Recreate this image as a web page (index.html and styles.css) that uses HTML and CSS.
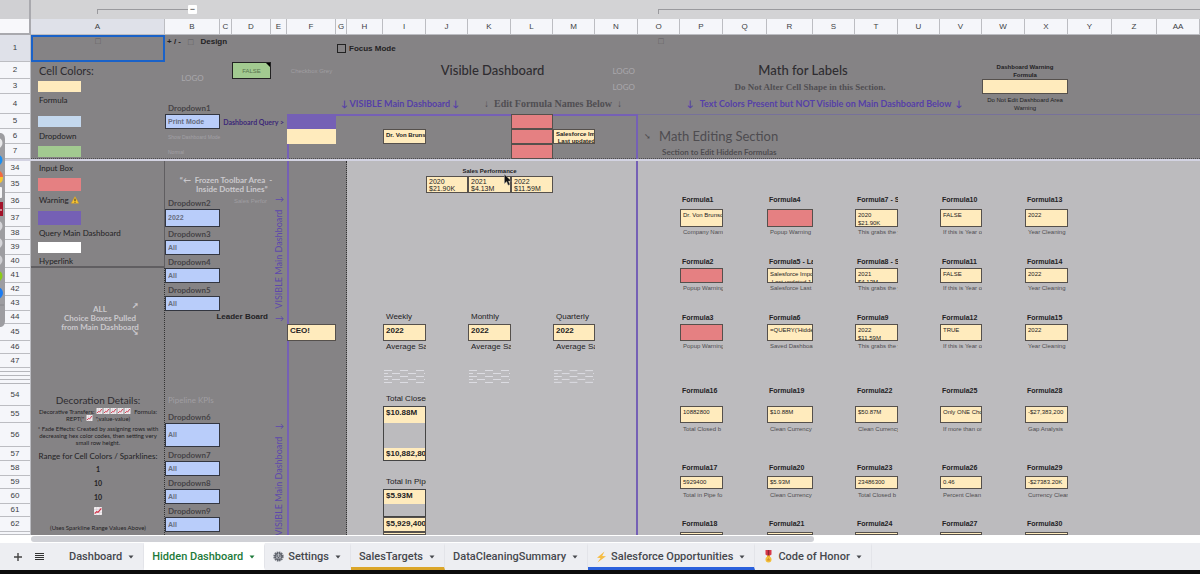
FILE: index.html
```html
<!DOCTYPE html>
<html lang="en">
<head>
<meta charset="utf-8">
<title>Hidden Dashboard</title>
<link rel="stylesheet" href="styles.css">
</head>
<body>
<svg class="defs" aria-hidden="true">
  <symbol id="chart" viewBox="0 0 12 12"><rect width="12" height="12" rx="1" fill="#f3eef0"/><path d="M0 4h12M0 8h12M4 0v12M8 0v12" stroke="#c9c3cc" stroke-width=".7"/><path d="M1 10l3-3 2 1 5-6" fill="none" stroke="#d32f45" stroke-width="1.8"/></symbol>
  <symbol id="warn" viewBox="0 0 12 12"><path d="M6 .8L11.6 11H.4z" fill="#f8c532" stroke="#d99d1c" stroke-width=".6" stroke-linejoin="round"/><path d="M6 4v3.8M6 8.8v1.3" stroke="#222" stroke-width="1.4"/></symbol>
  <symbol id="caret" viewBox="0 0 6 4"><path d="M.5 .5h5L3 3.5z" fill="currentColor"/></symbol>
  <symbol id="waves" viewBox="0 0 43 17"><g stroke="#dcdce2" stroke-width="1" stroke-dasharray="8 8" fill="none"><path d="M1 2.500h41M1 8.500h41M1 14.500h41"/><path d="M9 5.500h33M9 11.500h33"/><path d="M1 5.500h4M1 11.500h4"/></g></symbol>
</svg>
<main class="sheet">
<table class="grid">
<tbody>
<tr class="rg">
  <td class="h corner"></td>
  <td class="a w2 group"><button class="minus" type="button" aria-label="Collapse group">−</button></td>
  <td class="o wall group group-right"></td>
</tr>
<tr class="rl">
  <td class="h corner corner-letters"></td>
  <th class="a on">A</th><th class="b">B</th><th class="c">C</th><th class="d">D</th><th class="e">E</th><th class="f">F</th><th class="g">G</th><th class="hh">H</th><th class="i">I</th><th class="j">J</th><th class="k">K</th><th class="l">L</th><th class="m">M</th><th class="n">N</th><th class="o">O</th><th class="p">P</th><th class="q">Q</th><th class="r">R</th><th class="s">S</th><th class="t">T</th><th class="u">U</th><th class="v">V</th><th class="w">W</th><th class="x">X</th><th class="y">Y</th><th class="z">Z</th><th class="aa">AA</th>
</tr>
<tr class="r1">
  <td class="a wall zone zone-top"></td>
  <th class="h on">1</th>
  <td class="a selected faint top mid">□</td>
  <td class="b w3 top title-line"><b>+ / -</b><span class="faint">□</span><b class="design">Design</b></td>
  <td class="g w3 focus"><input type="checkbox" id="focus"><label for="focus">Focus Mode</label></td>
  <td class="o faint outline top mid">□</td>
</tr>
<tr class="r2">
  <th class="h">2</th>
  <td class="a round key-title">Cell Colors:</td>
  <td class="b h2 logo mid">LOGO</td>
  <td class="d false-box mid">FALSE</td>
  <td class="f pale mid">Checkbox Grey</td>
  <td class="hh w7 round heading mid">Visible Dashboard</td>
  <td class="n logo end">LOGO</td>
  <td class="p w6 round heading heading-math mid">Math for Labels</td>
  <td class="w w2 tiny strong mid">Dashboard Warning
Formula</td>
</tr>
<tr class="r3">
  <th class="h">3</th>
  <td class="a key"><span class="swatch cream"></span></td>
  <td class="n logo end">LOGO</td>
  <td class="p w6 serif mid">Do Not Alter Cell Shape in this Section.</td>
  <td class="w w2 box"></td>
</tr>
<tr class="r4">
  <th class="h">4</th>
  <td class="a key key-tall round">Formula</td>
  <td class="b round drop low"><label for="d1">Dropdown1</label></td>
  <td class="g w4 round violet violet-left">↓ VISIBLE Main Dashboard ↓</td>
  <td class="j w6 serif big mid">↓ &nbsp;Edit Formula Names Below &nbsp;↓</td>
  <td class="o w9 round violet violet-math mid">↓ &nbsp; Text Colors Present but NOT Visible on Main Dashboard Below &nbsp;↓</td>
  <td class="w w2 tiny mid">Do Not Edit Dashboard Area
Warning</td>
</tr>
<tr class="r5">
  <td class="f w9 zone frame"></td>
  <td class="o wall zone thin-rule"></td>
  <th class="h">5</th>
  <td class="a key"><span class="swatch sky"></span></td>
  <td class="b pick"><select id="d1"><option>Print Mode</option></select></td>
  <td class="c w3 round query">Dashboard Query &gt;</td>
  <td class="f purple"></td>
  <td class="l box red"></td>
</tr>
<tr class="r6">
  <th class="h">6</th>
  <td class="a key round">Dropdown</td>
  <td class="b micro">Show Dashboard Mode</td>
  <td class="f cream"></td>
  <td class="i box strong">Dr. Von Brunson</td>
  <td class="l box red"></td>
  <td class="m box tight strong">Salesforce Import
 Last updated 1</td>
  <td class="o w6 round section"><span class="tick">➘</span>Math Editing Section</td>
</tr>
<tr class="r7">
  <th class="h">7</th>
  <td class="a key"><span class="swatch green"></span></td>
  <td class="b micro">Normal</td>
  <td class="l box red"></td>
  <td class="o w6 round subsection">Section to Edit Hidden Formulas</td>
</tr>
<tr class="rf"><td class="h wall freeze"></td></tr>
<tr class="r34">
  <td class="a zone zone-side"></td>
  <td class="a zone zone-key"></td>
  <td class="b zone zone-tools"></td>
  <td class="f w9 zone frame frame-low"></td>
  <th class="h">34</th>
  <td class="a key round">Input Box</td>
  <td class="j w3 tiny strong low mid">Sales Performance</td>
</tr>
<tr class="r35">
  <th class="h">35</th>
  <td class="a key"><span class="swatch rose"></span></td>
  <td class="b w4 round light mid">“←&nbsp; Frozen Toolbar Area &nbsp;-
&nbsp; &nbsp; &nbsp; Inside Dotted Lines”</td>
  <td class="e vertical v1 round">↓ &nbsp; VISIBLE Main Dashboard &nbsp; ↓</td>
  <td class="j box seven">2020
$21.90K</td><td class="k box seven">2021
$4.13M</td><td class="l box seven">2022
$11.59M</td>
</tr>
<tr class="r36">
  <th class="h">36</th>
  <td class="a key round">Warning&nbsp;<svg class="ic8"><use href="#warn"/></svg></td>
  <td class="b round drop low"><label for="d2">Dropdown2</label></td>
  <td class="d pale light-label">Sales Perfor</td>
  <td class="p name up">Formula1</td><td class="r name up">Formula4</td><td class="t name up">Formula7 - S</td><td class="v name up">Formula10</td><td class="x name up">Formula13</td>
</tr>
<tr class="r37">
  <th class="h">37</th>
  <td class="a key"><span class="swatch purple"></span></td>
  <td class="b pick"><select id="d2"><option>2022</option></select></td>
  <td class="p box">Dr. Von Brunson</td><td class="r box red"></td><td class="t box">2020
$21.90K</td><td class="v box">FALSE</td><td class="x box">2022</td>
</tr>
<tr class="r38">
  <th class="h">38</th>
  <td class="a key round">Query Main Dashboard</td>
  <td class="b round drop"><label for="d3">Dropdown3</label></td>
  <td class="p note">Company Name</td><td class="r note">Popup Warning</td><td class="t note">This grabs the y</td><td class="v note">If this is Year or</td><td class="x note">Year Cleaning</td>
</tr>
<tr class="r39">
  <th class="h">39</th>
  <td class="a key"><span class="swatch white"></span></td>
  <td class="b pick"><select id="d3"><option>All</option></select></td>
</tr>
<tr class="r40">
  <th class="h">40</th>
  <td class="a key round">Hyperlink</td>
  <td class="b round drop"><label for="d4">Dropdown4</label></td>
  <td class="p name">Formula2</td><td class="r name">Formula5 - La</td><td class="t name">Formula8 - S</td><td class="v name">Formula11</td><td class="x name">Formula14</td>
</tr>
<tr class="r41">
  <th class="h">41</th>
  <td class="b pick"><select id="d4"><option>All</option></select></td>
  <td class="p box red"></td><td class="r box">Salesforce Import
 Last updated 1</td><td class="t box">2021
$4.13M</td><td class="v box">FALSE</td><td class="x box">2022</td>
</tr>
<tr class="r42">
  <th class="h">42</th>
  <td class="a h3 round light choice mid"><div>ALL
Choice Boxes Pulled
from Main Dashboard</div><div class="arrows"><span>➚</span><span>➘</span></div></td>
  <td class="b round drop"><label for="d5">Dropdown5</label></td>
  <td class="p note">Popup Warning</td><td class="r note">Salesforce Last</td><td class="t note">This grabs the y</td><td class="v note">If this is Year or</td><td class="x note">Year Cleaning</td>
</tr>
<tr class="r43">
  <th class="h">43</th>
  <td class="b pick"><select id="d5"><option>All</option></select></td>
</tr>
<tr class="r44">
  <th class="h">44</th>
  <td class="b w3 leader">Leader Board</td>
  <td class="i metric">Weekly</td><td class="k metric">Monthly</td><td class="m metric">Quarterly</td>
  <td class="p name">Formula3</td><td class="r name">Formula6</td><td class="t name">Formula9</td><td class="v name">Formula12</td><td class="x name">Formula15</td>
</tr>
<tr class="r45">
  <th class="h">45</th>
  <td class="f box value">CEO!</td>
  <td class="i box value">2022</td><td class="k box value">2022</td><td class="m box value">2022</td>
  <td class="p box red"></td><td class="r box">=QUERY('Hidden</td><td class="t box">2022
$11.59M</td><td class="v box">TRUE</td><td class="x box">2022</td>
</tr>
<tr class="r46">
  <th class="h">46</th>
  <td class="i metric">Average Sale</td><td class="k metric">Average Sale</td><td class="m metric">Average Sale</td>
  <td class="p note">Popup Warning</td><td class="r note">Saved Dashboard</td><td class="t note">This grabs the y</td><td class="v note">If this is Year or</td><td class="x note">Year Cleaning</td>
</tr>
<tr class="r47"><th class="h">47</th></tr>
<tr class="rh">
  <td class="h slim"></td>
  <td class="i"><svg class="waves"><use href="#waves"/></svg></td><td class="k"><svg class="waves"><use href="#waves"/></svg></td><td class="m"><svg class="waves"><use href="#waves"/></svg></td>
</tr>
<tr class="r54">
  <th class="h">54</th>
  <td class="a round deco low mid">Decoration Details:</td>
  <td class="b w2 round pipeline low">Pipeline KPIs</td>
  <td class="i metric low">Total Closed</td>
  <td class="p name high">Formula16</td><td class="r name high">Formula19</td><td class="t name high">Formula22</td><td class="v name high">Formula25</td><td class="x name high">Formula28</td>
</tr>
<tr class="r55">
  <td class="i zone stack stack-3"></td>
  <th class="h">55</th>
  <td class="a round fine mid"><div>Decorative Transfers: <svg class="ic"><use href="#chart"/></svg><svg class="ic"><use href="#chart"/></svg><svg class="ic"><use href="#chart"/></svg><svg class="ic"><use href="#chart"/></svg><svg class="ic"><use href="#chart"/></svg>&nbsp; Formula:<br>REPT(" <svg class="ic"><use href="#chart"/></svg> &nbsp;",value-value)</div></td>
  <td class="b round drop low"><label for="d6">Dropdown6</label></td>
  <td class="i fill value">$10.88M</td>
  <td class="p box">10882800</td><td class="r box">$10.88M</td><td class="t box">$50.87M</td><td class="v box">Only ONE Choice</td><td class="x box">-$27,383,200</td>
</tr>
<tr class="r56">
  <th class="h">56</th>
  <td class="a round fine mid">* Fade Effects: Created by assigning rows with
decreasing hex color codes, then setting very
small row height.</td>
  <td class="b pick"><select id="d6"><option>All</option></select></td>
  <td class="e vertical v2 round">↓ &nbsp; VISIBLE Main Dashboard &nbsp; ↓</td>
  <td class="p note high">Total Closed b</td><td class="r note high">Clean Currency</td><td class="t note high">Clean Currency</td><td class="v note high">If more than one</td><td class="x note high">Gap Analysis</td>
</tr>
<tr class="r57">
  <th class="h">57</th>
  <td class="a round range low mid">Range for Cell Colors / Sparklines:</td>
  <td class="b round drop low"><label for="d7">Dropdown7</label></td>
  <td class="i fill fill-last value">$10,882,800</td>
</tr>
<tr class="r58">
  <th class="h">58</th>
  <td class="a round number mid">1</td>
  <td class="b pick"><select id="d7"><option>All</option></select></td>
  <td class="p name up">Formula17</td><td class="r name up">Formula20</td><td class="t name up">Formula23</td><td class="v name up">Formula26</td><td class="x name up">Formula29</td>
</tr>
<tr class="r59">
  <th class="h">59</th>
  <td class="a round number mid">10</td>
  <td class="b round drop"><label for="d8">Dropdown8</label></td>
  <td class="i metric">Total In Pipe</td>
  <td class="p box">5929400</td><td class="r box">$5.93M</td><td class="t box">23486300</td><td class="v box">0.46</td><td class="x box">-$27383.20K</td>
</tr>
<tr class="r60">
  <td class="i zone stack stack-2"></td>
  <th class="h">60</th>
  <td class="a round number mid">10</td>
  <td class="b pick"><select id="d8"><option>All</option></select></td>
  <td class="i fill value">$5.93M</td>
  <td class="p note">Total in Pipe fo</td><td class="r note">Clean Currency</td><td class="t note">Total Closed b</td><td class="v note">Percent Clean</td><td class="x note">Currency Clean</td>
</tr>
<tr class="r61">
  <th class="h">61</th>
  <td class="a mid"><svg class="ic8"><use href="#chart"/></svg></td>
  <td class="b round drop"><label for="d9">Dropdown9</label></td>
</tr>
<tr class="r62">
  <th class="h">62</th>
  <td class="a round fine low mid">(Uses Sparkline Range Values Above)</td>
  <td class="b pick"><select id="d9"><option>All</option></select></td>
  <td class="i box value">$5,929,400</td>
  <td class="p name up">Formula18</td><td class="r name up">Formula21</td><td class="t name up">Formula24</td><td class="v name up">Formula27</td><td class="x name up">Formula30</td>
</tr>
<tr class="r63">
  <th class="h"></th>
  <td class="i box"></td><td class="p box"></td><td class="r box"></td><td class="t box"></td><td class="v box"></td><td class="x box"></td>
</tr>
</tbody>
</table>
</main>
<div class="scroll"><div class="thumb"></div></div>
<nav class="tabs">
  <button class="tool" type="button" aria-label="Add sheet"><svg width="10" height="10" viewBox="0 0 10 10"><path d="M5 1v8M1 5h8" stroke="#444" stroke-width="1.4"/></svg></button>
  <button class="tool tool-list" type="button" aria-label="All sheets"><svg width="9" height="10" viewBox="0 0 9 10"><path d="M0 1.500h9M0 3.500h9M0 5.500h9M0 7.500h9" stroke="#333"/></svg></button>
  <button class="tab" type="button">Dashboard<svg class="caret"><use href="#caret"/></svg></button>
  <button class="tab active" type="button">Hidden Dashboard<svg class="caret"><use href="#caret"/></svg></button>
  <button class="tab icon-tab" type="button"><svg width="11" height="11" viewBox="0 0 12 12"><circle cx="6" cy="6" r="4.600" fill="#b9bcc2" stroke="#666a72" stroke-width="2" stroke-dasharray="1.600 .8"/><circle cx="6" cy="6" r="3.600" fill="#8c9098" stroke="#555962"/><circle cx="6" cy="6" r="1.500" fill="#555962"/><path d="M6 6V2.500M6 6l3 2M6 6L3 8" stroke="#c9ccd2" stroke-width=".8"/></svg>Settings<svg class="caret"><use href="#caret"/></svg></button>
  <button class="tab gold" type="button">SalesTargets<svg class="caret"><use href="#caret"/></svg></button>
  <button class="tab" type="button">DataCleaningSummary<svg class="caret"><use href="#caret"/></svg></button>
  <button class="tab blue icon-tab" type="button"><svg width="11" height="12" viewBox="0 0 11 12"><path d="M8.500 .5L1 6.800l3.600.2L1.500 11.500 10 5.200 6.200 5z" fill="#f6bd45"/></svg>Salesforce Opportunities<svg class="caret"><use href="#caret"/></svg></button>
  <button class="tab icon-tab" type="button"><svg width="11" height="13" viewBox="0 0 11 13"><path d="M2.500 0h6v4.500l-3 2-3-2z" fill="#d8384a"/><path d="M4.800 0h1.400v6H4.800z" fill="#8e2434"/><path d="M4 5.500h3V7H4z" fill="#e9a92c"/><circle cx="5.500" cy="9.500" r="3" fill="#f2bf3c"/><path d="M5.500 7.600l.6 1.300 1.300.1-1 .9.300 1.300-1.200-.7-1.200.7.3-1.300-1-.9 1.300-.1z" fill="#d9962a"/></svg>Code of Honor<svg class="caret"><use href="#caret"/></svg></button>
</nav>
<footer class="edge"></footer>
<svg class="dock" viewBox="0 0 6 194" aria-hidden="true">
  <path d="M0 0h1q4 1 4 6v182q0 5-4 6H0z" fill="#9d9da1"/>
  <g><circle cx="-3" cy="10" r="5.500" fill="#e8e8ea"/><circle cx="-3" cy="27" r="5.500" fill="#1c8ef0"/><path d="M0 38q3 2 3 6H0z" fill="#f26a3d"/><path d="M0 44h3q0 5-3 6z" fill="#f7c62e"/><rect x="-5" y="54" width="7" height="11" rx="1" fill="#f6f6f8"/><rect x="-5" y="69" width="8" height="14" fill="#a3122a"/><path d="M0 77h2" stroke="#fff"/><circle cx="-3" cy="93" r="5.500" fill="#d5d5d9"/><circle cx="-3" cy="110" r="5.500" fill="#d5d5d9"/><circle cx="-3" cy="127" r="5.500" fill="#cfcfd3"/><circle cx="-3" cy="143" r="5.500" fill="#8ccb17"/><circle cx="-3" cy="160" r="6" fill="#1b7cf2"/><path d="M0 172h4" stroke="#86868a"/></g>
</svg>
<svg class="cursor" viewBox="0 0 8 12" aria-hidden="true"><path d="M.5 .5v9L2.700 7.500l1.500 3.700 1.700-.7L4.400 7h3z" fill="#111" stroke="#999" stroke-width=".5"/></svg>
</body>
</html>
```

FILE: styles.css
```css
* { box-sizing: border-box; }

body {
  margin: 0;
  height: 100vh;
  display: flex;
  flex-direction: column;
  overflow: hidden;
  background: #fff;
  color: #232224;
  font-family: "Liberation Sans", Arial, sans-serif;
}

button, select, input { margin: 0; padding: 0; border: 0; font: inherit; color: inherit; }

.defs { position: absolute; width: 0; height: 0; }

/* ---- sheet grid ---- */
.sheet { flex: 1; min-height: 0; overflow: hidden; background: #bcbbbe; }

.grid {
  display: grid;
  background: linear-gradient(#d3d3d5 19px, #bcbbbe 19px);
  grid-template-columns:
    31px 134px 55px 12px 39px 16px 49px 11px 36px 43px 42px 43px 42px 42px 43px
    42px 43px 44px 46px 42px 43px 42px 42px 43px 43px 44px 45px minmax(43px, 1fr);
  grid-template-rows:
    19px 16px 27px 17px 15px 20px 15px 15px 15px 2px
    15px 17px 16px 18px 13px 15px 13px 15px 13px 15px 13px 17px 13px 14px 17px
    21px 17px 24px 14px 15px 13px 15px 13px 15px 3px;
}
.grid tbody, .grid tr { display: contents; }
.grid td, .grid th {
  display: flex;
  align-items: center;
  min-width: 0;
  min-height: 0;
  padding: 0;
  font-size: 7px;
  line-height: 8px;
  white-space: pre;
}

/* rows */
.rg > * { grid-row-start: 1; }
.rl > * { grid-row-start: 2; }
.r1 > * { grid-row-start: 3; }
.r2 > * { grid-row-start: 4; }
.r3 > * { grid-row-start: 5; }
.r4 > * { grid-row-start: 6; }
.r5 > * { grid-row-start: 7; }
.r6 > * { grid-row-start: 8; }
.r7 > * { grid-row-start: 9; }
.rf > * { grid-row-start: 10; }
.r34 > * { grid-row-start: 11; }
.r35 > * { grid-row-start: 12; }
.r36 > * { grid-row-start: 13; }
.r37 > * { grid-row-start: 14; }
.r38 > * { grid-row-start: 15; }
.r39 > * { grid-row-start: 16; }
.r40 > * { grid-row-start: 17; }
.r41 > * { grid-row-start: 18; }
.r42 > * { grid-row-start: 19; }
.r43 > * { grid-row-start: 20; }
.r44 > * { grid-row-start: 21; }
.r45 > * { grid-row-start: 22; }
.r46 > * { grid-row-start: 23; }
.r47 > * { grid-row-start: 24; }
.rh > * { grid-row-start: 25; }
.r54 > * { grid-row-start: 26; }
.r55 > * { grid-row-start: 27; }
.r56 > * { grid-row-start: 28; }
.r57 > * { grid-row-start: 29; }
.r58 > * { grid-row-start: 30; }
.r59 > * { grid-row-start: 31; }
.r60 > * { grid-row-start: 32; }
.r61 > * { grid-row-start: 33; }
.r62 > * { grid-row-start: 34; }
.r63 > * { grid-row-start: 35; }

/* columns */
.h { grid-column-start: 1; }
.a { grid-column-start: 2; }
.b { grid-column-start: 3; }
.c { grid-column-start: 4; }
.d { grid-column-start: 5; }
.e { grid-column-start: 6; }
.f { grid-column-start: 7; }
.g { grid-column-start: 8; }
.hh { grid-column-start: 9; }
.i { grid-column-start: 10; }
.j { grid-column-start: 11; }
.k { grid-column-start: 12; }
.l { grid-column-start: 13; }
.m { grid-column-start: 14; }
.n { grid-column-start: 15; }
.o { grid-column-start: 16; }
.p { grid-column-start: 17; }
.q { grid-column-start: 18; }
.r { grid-column-start: 19; }
.s { grid-column-start: 20; }
.t { grid-column-start: 21; }
.u { grid-column-start: 22; }
.v { grid-column-start: 23; }
.w { grid-column-start: 24; }
.x { grid-column-start: 25; }
.y { grid-column-start: 26; }
.z { grid-column-start: 27; }
.aa { grid-column-start: 28; }

/* spans */
.w2 { grid-column-end: span 2; }
.w3 { grid-column-end: span 3; }
.w4 { grid-column-end: span 4; }
.w6 { grid-column-end: span 6; }
.w7 { grid-column-end: span 7; }
.w9 { grid-column-end: span 9; }
.wall { grid-column-end: -1; }
.h2 { grid-row-end: span 2; }
.h3 { grid-row-end: span 4; }

/* headers */
.grid th {
  justify-content: center;
  background: #f5f6fa;
  border-right: 1px solid #bcbdc2;
  border-bottom: 1px solid #bcbdc2;
  color: #3c3e44;
  font-weight: 400;
  font-size: 8px;
}
.grid .on { background: #dfe1e9; }
.corner { background: #d0d0d3; border-right: 2px solid #a9a9ae; }
.corner-letters { background: #f8f8fb; border-bottom: 2px solid #a9a9ae; }
.grid .group { justify-content: flex-end; padding-right: 23px; }
.group::before {
  content: "";
  flex: 1;
  height: 4px;
  margin: 4px 0 0 66px;
  border: solid #9a9a9e;
  border-width: 1px 0 0 1px;
}
.grid .group-right { padding-right: 0; }
.group-right::before { margin-left: 20px; }
.minus {
  width: 9px; height: 9px;
  background: #fff;
  border-radius: 1px;
  font-size: 9px; line-height: 9px;
}
.slim { background: repeating-linear-gradient(#f5f6fa 0 3px, #b5b6bb 3px 4px); border-right: 1px solid #bcbdc2; }

/* shaded regions behind the cells */
.zone-top { grid-row-end: span 7; background: #858385; border-bottom: 1px dotted #4c4a4e; }
.zone-side { grid-row-end: -1; background: #858385; border-right: 1px dotted #333; }
.zone-key { grid-row-end: span 7; border: solid #605e61; border-width: 0 1px 2px 0; }
.zone-tools { grid-row-end: -1; grid-column-end: span 6; background: #858385; border-right: 1px dotted #333; }
.frame { grid-row-end: span 3; border: 2px solid #7560b5; border-bottom: 0; }
.frame-low { grid-row-end: -1; border-top: 0; }
.thin-rule { border-top: 1px solid #77719a; }
.freeze { background: #d3d3e2; }
.stack { border: 1px solid #444; }
.stack-3 { grid-row-end: span 3; }
.stack-2 { grid-row-end: span 2; }

/* alignment */
.grid .mid { justify-content: center; text-align: center; }
.grid .end { justify-content: flex-end; padding-right: 3px; }
.grid .top { align-items: flex-start; }
.grid .low { align-items: flex-end; padding-bottom: 1px; }

/* text kinds */
.round, .logo { font-family: Lato, "Noto Sans", sans-serif; }
.grid .faint, .faint { color: #5e5c60; font-size: 9px; }
.grid .outline { padding: 2px 0 0 4px; }
.grid .heading { font-size: 13px; line-height: 15px; font-weight: 500; color: #2e2c30; }
.grid .heading-math { padding-right: 14px; }
.grid .logo { color: #aaa8ac; font-size: 8px; }
.grid .pale { color: #a09ea2; font-size: 6px; }
.grid .tiny { font-size: 6px; line-height: 8px; }
.strong { font-weight: 700; }
.grid .serif { font-family: "Liberation Serif", serif; font-weight: 700; font-size: 9px; color: #504e52; }
.grid .big { font-size: 10px; }
.grid .violet { color: #5540a8; font-size: 9px; font-weight: 700; }
.grid .violet-left { padding-left: 5px; }
.grid .violet-math { padding-right: 14px; }
.grid .query { color: #3c2878; font-size: 7px; font-weight: 700; justify-content: flex-end; padding-right: 3px; }
.grid .section { font-size: 13px; line-height: 15px; color: #4e4c50; }
.tick { width: 21px; padding-left: 6px; font-size: 8px; }
.grid .subsection { padding-left: 24px; font-size: 8px; font-weight: 700; color: #4e4c50; }
.grid .micro { padding-left: 3px; font-size: 5px; color: #a3a1a5; }
.grid .light { color: #cbc9cd; font-size: 8px; line-height: 9px; font-weight: 700; }
.grid .light-label { padding-left: 2px; }
.grid .title-line { padding: 2px 2px; gap: 7px; font-size: 8px; line-height: 10px; }
.selected { border: 2px solid #1a62c8; }
.grid .focus { padding-left: 1px; gap: 3px; font-size: 8px; font-weight: 700; }
.focus input { appearance: none; width: 9px; height: 9px; border: 1px solid #222; }
.grid .false-box { background: #a2ca90; border: 1px solid #222; font-size: 6px; color: #57714d; position: relative; }
.false-box::after {
  content: "";
  position: absolute; top: 0; right: 0;
  border: solid transparent;
  border-width: 0 4px 4px 0;
  border-right-color: #000;
}

/* colour key */
.grid .key-title { padding-left: 8px; font-size: 11px; line-height: 13px; color: #2e2c30; }
.grid .key { padding: 0 0 2px 8px; font-size: 8px; }
.grid .key-tall { padding-bottom: 8px; }
.swatch { align-self: stretch; width: 43px; margin: 2px 0 0; margin-left: -1px; }
.cream { background: #ffebbd; }
.sky { background: #c4d8ee; }
.green { background: #a2ca90; }
.rose { background: #e58082; }
.purple { background: #7560b5; }
.white { background: #fff; }
.ic8 { width: 8px; height: 8px; }
.ic { width: 7px; height: 6px; }

/* toolbar drop-downs */
.grid .drop { padding-left: 3px; font-size: 8px; color: #454347; font-weight: 700; }
.grid .drop.low { padding-bottom: 2px; }
.pick select {
  appearance: none;
  align-self: stretch;
  width: 100%;
  padding-left: 2px;
  background: #b9cdfa;
  border: 1px solid #333640;
  border-radius: 0;
  color: #686e80;
  font-size: 7px;
  font-weight: 700;
}
.grid .vertical {
  writing-mode: vertical-rl;
  transform: rotate(180deg);
  color: #5d48ac;
  font-size: 9px;
  line-height: 16px;
  overflow: hidden;
}
.grid .v1 { grid-row-end: span 11; justify-content: center; }
.grid .v2 { grid-row-end: -1; justify-content: flex-end; }
.grid .leader { justify-content: flex-end; padding: 0 3px 2px 0; font-size: 8px; font-weight: 700; }
.grid .pipeline { padding: 0 0 2px 3px; font-size: 8px; color: #a09ea2; }

/* boxes and their labels */
.grid .box {
  align-items: flex-start;
  padding: 1px 0 0 2px;
  background: #ffebbd;
  border: 1px solid #55504c;
  overflow: hidden;
  font-size: 6px;
  line-height: 8px;
}
.grid .red { background: #e58082; }
.grid .seven { font-size: 7px; line-height: 7px; }
.grid .tight { line-height: 7px; }
.grid .fill { margin: 1px 1px 0; padding-left: 2px; background: #ffebbd; overflow: hidden; align-items: flex-start; padding-top: 1px; }
.grid .fill-last { margin-bottom: 1px; }
.grid .value { font-size: 8px; line-height: 10px; font-weight: 700; }
.grid .name { padding-left: 2px; font-weight: 700; overflow: hidden; }
.grid .up { padding-bottom: 2px; }
.grid .note { padding: 0 0 3px 3px; font-size: 6px; color: #4e4d50; overflow: hidden; }
.grid .high { align-items: flex-start; padding-top: 2px; }
.grid .metric { padding: 0 0 2px 3px; font-size: 8px; line-height: 10px; overflow: hidden; }
.waves { width: 43px; height: 17px; }

/* notes in column A */
.grid .deco { font-size: 10px; line-height: 12px; padding-bottom: 0; color: #2e2c30; }
.grid .fine { font-size: 6px; line-height: 7px; }
.grid .range { font-size: 8px; }
.grid .number { font-weight: 700; }
.grid .choice { position: relative; padding: 12px 0 0 4px; }
.arrows {
  position: absolute;
  top: 18px;
  right: 26px;
  bottom: 0;
  display: flex;
  flex-direction: column;
  gap: 18px;
}

/* ---- bottom bars ---- */
.scroll { height: 8px; padding: 1px 0 1px 31px; background: #fff; }
.thumb { width: 67%; height: 6px; background: #d0d1d6; border-radius: 4px; }

.tabs { display: flex; height: 27px; background: #edeef2; font: 500 11px Roboto, sans-serif; color: #46484d; }
.tabs button { background: none; }
.tool { width: 35px; display: grid; place-items: center; }
.tabs .tool-list { width: 26px; place-items: center start; }
.tabs .tab {
  display: flex;
  align-items: center;
  gap: 6px;
  padding: 0 9px 0 8px;
  border: solid transparent;
  border-width: 3px 1px 3px 0;
  border-right-color: #e3e4e9;
}
.icon-tab svg:first-child { margin-right: -2px; }
.tabs .active { background: #fff; color: #1d7a3a; }
.tabs .gold { border-bottom-color: #dba62a; }
.tabs .blue { border-bottom-color: #2a60dc; }
.caret { width: 6px; height: 4px; }
.edge { height: 4px; background: #0c0c0c; }

/* things floating over the sheet */
.dock { position: absolute; left: 0; top: 133px; width: 6px; height: 194px; }
.cursor { position: absolute; left: 504px; top: 174px; width: 8px; height: 12px; }
```
